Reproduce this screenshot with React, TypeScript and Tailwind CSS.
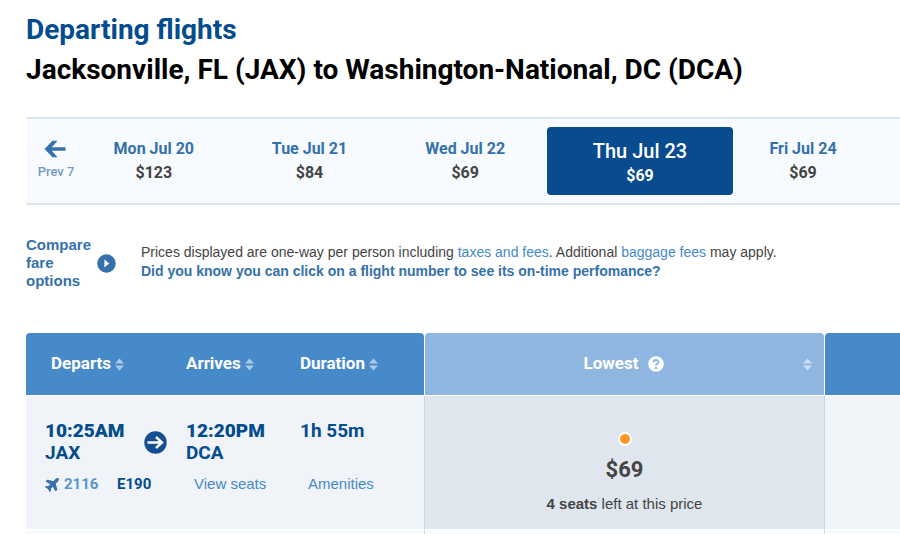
import React from "react";
import { FaPlane } from "react-icons/fa";

interface Day {
    label: string;
    price: string;
    selected?: boolean;
}

const days: Day[] = [
    { label: "Mon Jul 20", price: "$123" },
    { label: "Tue Jul 21", price: "$84" },
    { label: "Wed Jul 22", price: "$69" },
    { label: "Thu Jul 23", price: "$69", selected: true },
    { label: "Fri Jul 24", price: "$69" },
];

const SortIcon: React.FC = () => (
    <svg width="9" height="13" viewBox="0 0 9 13" className="opacity-55" aria-hidden="true">
        <path d="M4.5 0.5 L9 5.5 H0 Z M4.5 12.5 L9 7.5 H0 Z" fill="white" />
    </svg>
);

const SortButton: React.FC<{ children: React.ReactNode }> = ({ children }) => (
    <button className="flex items-center gap-1 font-bold">
        {children}
        <SortIcon />
    </button>
);

const DayButton: React.FC<{ day: Day }> = ({ day }) => {
    if (day.selected) {
        return (
            <button className="mx-1 my-2 rounded-sm bg-[#084b8e] pt-1 text-white">
                <span className="block text-[20px] leading-[26px] font-medium">{day.label}</span>
                <span className="block text-base font-bold">{day.price}</span>
            </button>
        );
    }
    return (
        <button className="text-base leading-6 font-bold">
            <span className="block text-[#3571aa]">{day.label}</span>
            <span className="block text-[#444]">{day.price}</span>
        </button>
    );
};

const DayPicker: React.FC = () => (
    <nav
        aria-label="Travel dates"
        className="mt-[27px] grid h-[88px] grid-cols-[50px_1fr_1fr_1fr_194px_132px] border-y-2 border-[#dfe7ee] bg-[#f7fafe] pr-[31px]"
    >
        <button className="flex flex-col items-center justify-center gap-1 pl-2 text-[#7799bd]">
            <svg width="22" height="18" viewBox="0 0 22 18" aria-hidden="true">
                <path
                    d="M0.5 9 L8.5 0.8 H13.5 L7.8 7.2 H21.5 V10.8 H7.8 L13.5 17.2 H8.5 Z"
                    fill="#3571aa"
                />
            </svg>
            <span className="pl-0.5 text-[13px] leading-5 font-medium whitespace-nowrap">Prev 7</span>
        </button>
        {days.map((day) => (
            <DayButton key={day.label} day={day} />
        ))}
    </nav>
);

const FareNotes: React.FC = () => (
    <section className="mt-[31px] flex items-center font-['Liberation_Sans',Arial,sans-serif] text-sm">
        <button className="flex w-[115px] items-center gap-1.5 text-left text-[15px] leading-[18px] font-bold text-[#3571aa]">
            <span className="w-[65px]">Compare fare options</span>
            <svg width="19" height="19" viewBox="0 0 19 19" aria-hidden="true">
                <circle cx="9.5" cy="9.5" r="9.3" fill="#3571aa" />
                <path d="M7.4 5.4 L12.2 9.5 L7.4 13.6 Z" fill="white" />
            </svg>
        </button>
        <div className="pb-0.5 leading-[19px]">
            <p className="text-[#444]">
                Prices displayed are one-way per person including{" "}
                <a href="#taxes" className="text-[#4689c8]">taxes and fees</a>. Additional{" "}
                <a href="#baggage" className="text-[#4689c8]">baggage fees</a> may apply.
            </p>
            <p className="font-bold text-[#3571aa]">
                Did you know you can click on a flight number to see its on-time perfomance?
            </p>
        </div>
    </section>
);

const FlightTable: React.FC = () => (
    <table className="mt-[43px] w-full table-fixed border-separate border-spacing-0 text-left">
        <colgroup>
            <col className="w-[160px]" />
            <col className="w-[114px]" />
            <col className="w-[124px]" />
            <col />
            <col className="w-[76px]" />
        </colgroup>
        <thead className="text-[17px] text-white">
            <tr className="h-[63px]">
                <th className="rounded-tl-sm border-b border-white bg-[#468ac9] pl-[25px]">
                    <SortButton>Departs</SortButton>
                </th>
                <th className="border-b border-white bg-[#468ac9]">
                    <SortButton>Arrives</SortButton>
                </th>
                <th className="rounded-tr-sm border-b border-white bg-[#468ac9]">
                    <SortButton>Duration</SortButton>
                </th>
                <th className="rounded-t-sm border-b border-l border-white bg-[#8fb6e1] bg-clip-padding">
                    <div className="flex items-center pr-3 pl-5">
                        <div className="flex flex-1 items-center justify-center gap-2.5">
                            Lowest
                            <button aria-label="About the lowest fare">
                                <svg width="16" height="16" viewBox="0 0 16 16" aria-hidden="true">
                                    <circle cx="8" cy="8" r="7.8" fill="white" />
                                    <path
                                        d="M5.6 6.2 C5.6 3.2 10.4 3.2 10.4 6 C10.4 7.8 8 7.7 8 9.6"
                                        fill="none"
                                        stroke="#8fb6e1"
                                        strokeWidth="2"
                                    />
                                    <circle cx="8" cy="12" r="1.2" fill="#8fb6e1" />
                                </svg>
                            </button>
                        </div>
                        <button aria-label="Sort by lowest fare">
                            <SortIcon />
                        </button>
                    </div>
                </th>
                <th
                    aria-label="Other fares"
                    className="rounded-tl-sm border-b border-l border-white bg-[#468ac9] bg-clip-padding"
                />
            </tr>
        </thead>
        <tbody className="text-[#034c8e]">
            <tr className="h-[133px] align-top">
                <td className="bg-[#f0f4f8] pt-6 pl-[19px]">
                    <div className="flex items-center justify-between pr-[19px] text-[19px] leading-[22px]">
                        <div>
                            <div className="font-black">10:25AM</div>
                            <div className="font-bold">JAX</div>
                        </div>
                        <svg width="23" height="23" viewBox="0 0 23 23" className="shrink-0" aria-hidden="true">
                            <circle cx="11.5" cy="11.5" r="11.2" fill="#154f92" />
                            <path
                                d="M3.5 11.5 H18 M12 6 L18 11.5 L12 17"
                                fill="none"
                                stroke="white"
                                strokeWidth="2.4"
                            />
                        </svg>
                    </div>
                    <div className="mt-2 flex items-center text-[15px] leading-6 font-bold">
                        <a href="#flight-2116" className="flex w-[72px] items-center gap-[3px] text-[#5795cf]">
                            <FaPlane className="size-4 -rotate-45 text-[#3571aa]" />
                            2116
                        </a>
                        E190
                    </div>
                </td>
                <td className="bg-[#f0f4f8] pt-6">
                    <div className="text-[19px] leading-[22px]">
                        <div className="font-black">12:20PM</div>
                        <div className="font-bold">DCA</div>
                    </div>
                    <a
                        href="#seats"
                        className="mt-2 block pl-2 font-['Liberation_Sans',Arial,sans-serif] text-[15px] leading-6 text-[#4689c8]"
                    >
                        View seats
                    </a>
                </td>
                <td className="bg-[#f0f4f8] pt-6">
                    <div className="h-11 text-[19px] leading-[22px] font-bold">1h 55m</div>
                    <a
                        href="#amenities"
                        className="mt-2 block pl-2 font-['Liberation_Sans',Arial,sans-serif] text-[15px] leading-6 text-[#4689c8]"
                    >
                        Amenities
                    </a>
                </td>
                <td className="border-l border-[#c8d8e6] bg-[#dfe6ee] pt-9 text-center text-[#444]">
                    <label className="block">
                        <input
                            type="radio"
                            name="fare"
                            className="mx-auto block size-3.5 appearance-none rounded-full border-2 border-white bg-[#ff9727]"
                        />
                        <span className="mt-2 block text-[22px] leading-8 font-bold">$69</span>
                        <span className="mt-2 block font-['Liberation_Sans',Arial,sans-serif] text-[15px] leading-5">
                            <b>4 seats</b> left at this price
                        </span>
                    </label>
                </td>
                <td className="border-l border-[#c8d8e6] bg-[#f0f4f8]" />
            </tr>
            <tr className="h-[5px]">
                <td colSpan={3} className="border-t border-white bg-[#f7fafe]" />
                <td className="border-t border-l border-t-white border-l-[#c8d8e6] bg-[#f7fafe]" />
                <td className="border-t border-l border-t-white border-l-[#c8d8e6] bg-[#f7fafe]" />
            </tr>
        </tbody>
    </table>
);

export default function App() {
    return (
        <main className="bg-white pt-[10px] pl-[26px] font-['Roboto',sans-serif]">
            <h1 className="text-[28px] leading-10 font-bold text-[#034c8e]">Departing flights</h1>
            <h2 className="text-[28px] leading-10 font-bold text-black">
                Jacksonville, FL (JAX) to Washington-National, DC (DCA)
            </h2>
            <DayPicker />
            <FareNotes />
            <FlightTable />
        </main>
    );
}
